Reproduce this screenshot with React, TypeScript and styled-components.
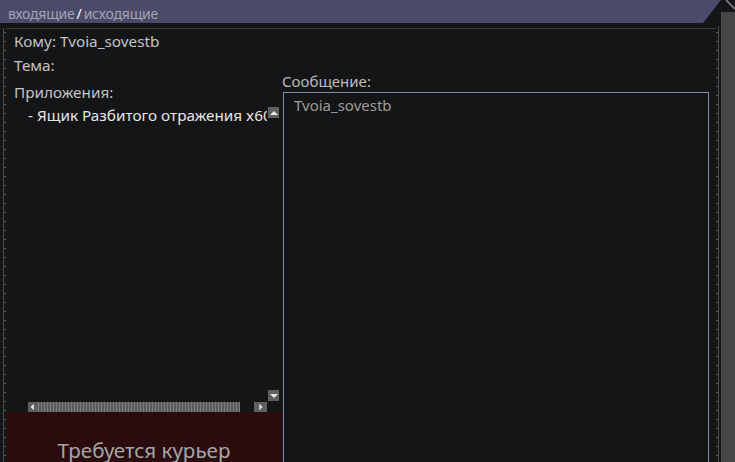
import React from "react";
import styled, { createGlobalStyle } from "styled-components";

const Global = createGlobalStyle`
  html, body { margin: 0; padding: 0; background: #141517; }
  * { box-sizing: border-box; }
`;

const Screen = styled.div`
  width: 735px;
  height: 462px;
  overflow: hidden;
  display: flex;
  background: #141517;
  font-family: "Noto Sans", "Open Sans", sans-serif;
  color: #c6c6c6;
`;

const Main = styled.div`
  width: 721px;
  display: flex;
  flex-direction: column;
`;

const Header = styled.div`
  height: 23px;
  flex-shrink: 0;
  background: #4a4a6a;
  clip-path: polygon(0 0, 100% 0, calc(100% - 18px) 100%, 0 100%);
  display: flex;
  align-items: flex-end;
  padding: 0 0 1px 8px;
  font-size: 14px;
  line-height: 17px;
  color: #a4a4b6;
  letter-spacing: -0.2px;
`;

const Slash = styled.span`
  color: #ffffff;
  margin: 0 2px;
`;

const Frame = styled.div`
  flex: 1;
  display: flex;
  margin-top: 5px;
  padding-right: 2px;
  min-height: 0;
`;

const LeftRuler = styled.div`
  width: 6px;
  flex-shrink: 0;
  background:
    linear-gradient(#4c4c4c, #4c4c4c) 3px 0 / 1px 100% no-repeat,
    repeating-linear-gradient(to bottom, transparent 0 4px, #5a5a5a 4px 5px, transparent 5px 9px) 4px 0 / 2px 100% no-repeat;
`;

const RightRuler = styled.div`
  width: 3px;
  flex-shrink: 0;
  margin-top: -2px;
  background:
    linear-gradient(#4c4c4c, #4c4c4c) 2px 0 / 1px 100% no-repeat,
    repeating-linear-gradient(to bottom, transparent 0 6px, #5a5a5a 6px 7px, transparent 7px 9px) 0 0 / 2px 100% no-repeat;
`;

const Inner = styled.div`
  flex: 1;
  display: flex;
  border-top: 1px solid #393939;
  min-width: 0;
`;

const LeftPane = styled.div`
  width: 276px;
  flex-shrink: 0;
  display: flex;
  flex-direction: column;
`;

const Field = styled.div<{ $gap?: number }>`
  height: 24px;
  line-height: 24px;
  font-size: 15.3px;
  padding-left: 8px;
  margin-top: ${(p) => p.$gap ?? 0}px;
  color: #c4c4c4;
  white-space: nowrap;
`;

const AttachList = styled.div`
  flex: 1;
  display: grid;
  grid-template-columns: 1fr 11px;
  grid-template-rows: 1fr 10px;
  margin: 0 3px 0 8px;
  min-height: 0;
`;

const Viewport = styled.div`
  grid-column: 1;
  grid-row: 1;
  overflow: hidden;
  padding-left: 14px;
  padding-right: 1px;
`;

const Item = styled.div`
  height: 22px;
  line-height: 22px;
  font-size: 15.3px;
  color: #e6e6e6;
  white-space: nowrap;
  overflow: hidden;
`;

const VScroll = styled.div`
  grid-column: 2;
  grid-row: 1;
  display: flex;
  flex-direction: column;
  justify-content: space-between;
  padding: 3px 0 1px;
`;

const ArrowBtn = styled.div<{ $w: number; $h: number }>`
  width: ${(p) => p.$w}px;
  height: ${(p) => p.$h}px;
  background: #5f5f5f;
  display: flex;
  align-items: center;
  justify-content: center;
  flex-shrink: 0;
`;

const HScroll = styled.div`
  grid-column: 1;
  grid-row: 2;
  display: flex;
  align-items: stretch;
  padding-left: 14px;
  padding-right: 1px;
`;

const Track = styled.div`
  width: 202px;
  background: repeating-linear-gradient(90deg, #7c7c7c 0 1px, #5c5c5c 1px 3px);
`;

const Spacer = styled.div`
  flex: 1;
`;

const Courier = styled.div`
  height: 50px;
  flex-shrink: 0;
  background: #2a0c0e;
  display: flex;
  align-items: flex-end;
  justify-content: center;
  font-size: 20.6px;
  line-height: 24px;
  color: #a6a6a6;
`;

const RightPane = styled.div`
  flex: 1;
  display: flex;
  flex-direction: column;
  padding: 42px 7px 0 1px;
  min-width: 0;
`;

const Label = styled.div`
  height: 21px;
  line-height: 21px;
  font-size: 15px;
  margin-left: -1px;
  color: #bdbdbd;
`;

const MessageBox = styled.div`
  flex: 1;
  margin-bottom: -10px;
  border: 1px solid #8686ae;
  padding: 3px 10px;
  font-size: 15px;
  line-height: 18px;
  color: #9c9c9c;
`;

const Side = styled.div`
  flex: 1;
  display: flex;
  flex-direction: column;
`;

const Corner = styled.svg`
  display: block;
  flex-shrink: 0;
`;

const SidePanel = styled.div`
  flex: 1;
  background: #464646;
  border-left: 1px solid #4e4e4c;
`;

const Tri = ({ dir }: { dir: "up" | "down" | "left" | "right" }) => {
  const pts = {
    up: "1,6 5,2 9,6",
    down: "1,2 5,6 9,2",
    left: "6,1 2,5 6,9",
    right: "3,1 7,5 3,9",
  }[dir];
  const vert = dir === "up" || dir === "down";
  return (
    <svg width={vert ? 10 : 8} height={vert ? 8 : 10} viewBox={vert ? "0 0 10 8" : "0 0 10 10"}>
      <polygon points={pts} fill="#e8e8e8" />
    </svg>
  );
};

export default function App() {
  return (
    <>
      <Global />
      <Screen>
        <Main>
          <Header>
            входящие<Slash>/</Slash>исходящие
          </Header>
          <Frame>
            <LeftRuler />
            <Inner>
              <LeftPane>
                <Field>Кому: Tvoia_sovestb</Field>
                <Field>Тема:</Field>
                <Field $gap={3}>Приложения:</Field>
                <AttachList>
                  <Viewport>
                    <Item>- Ящик Разбитого отражения x60</Item>
                  </Viewport>
                  <VScroll>
                    <ArrowBtn $w={11} $h={11}>
                      <Tri dir="up" />
                    </ArrowBtn>
                    <ArrowBtn $w={11} $h={11}>
                      <Tri dir="down" />
                    </ArrowBtn>
                  </VScroll>
                  <HScroll>
                    <ArrowBtn $w={10} $h={10}>
                      <Tri dir="left" />
                    </ArrowBtn>
                    <Track />
                    <Spacer />
                    <ArrowBtn $w={13} $h={10}>
                      <Tri dir="right" />
                    </ArrowBtn>
                  </HScroll>
                </AttachList>
                <Courier>Требуется курьер</Courier>
              </LeftPane>
              <RightPane>
                <Label>Сообщение:</Label>
                <MessageBox>Tvoia_sovestb</MessageBox>
              </RightPane>
            </Inner>
            <RightRuler />
          </Frame>
        </Main>
        <Side>
          <Corner width="14" height="12" viewBox="0 0 14 12">
            <line x1="5" y1="0" x2="14" y2="9" stroke="#8e8ea6" strokeWidth="1.4" />
          </Corner>
          <SidePanel />
        </Side>
      </Screen>
    </>
  );
}
